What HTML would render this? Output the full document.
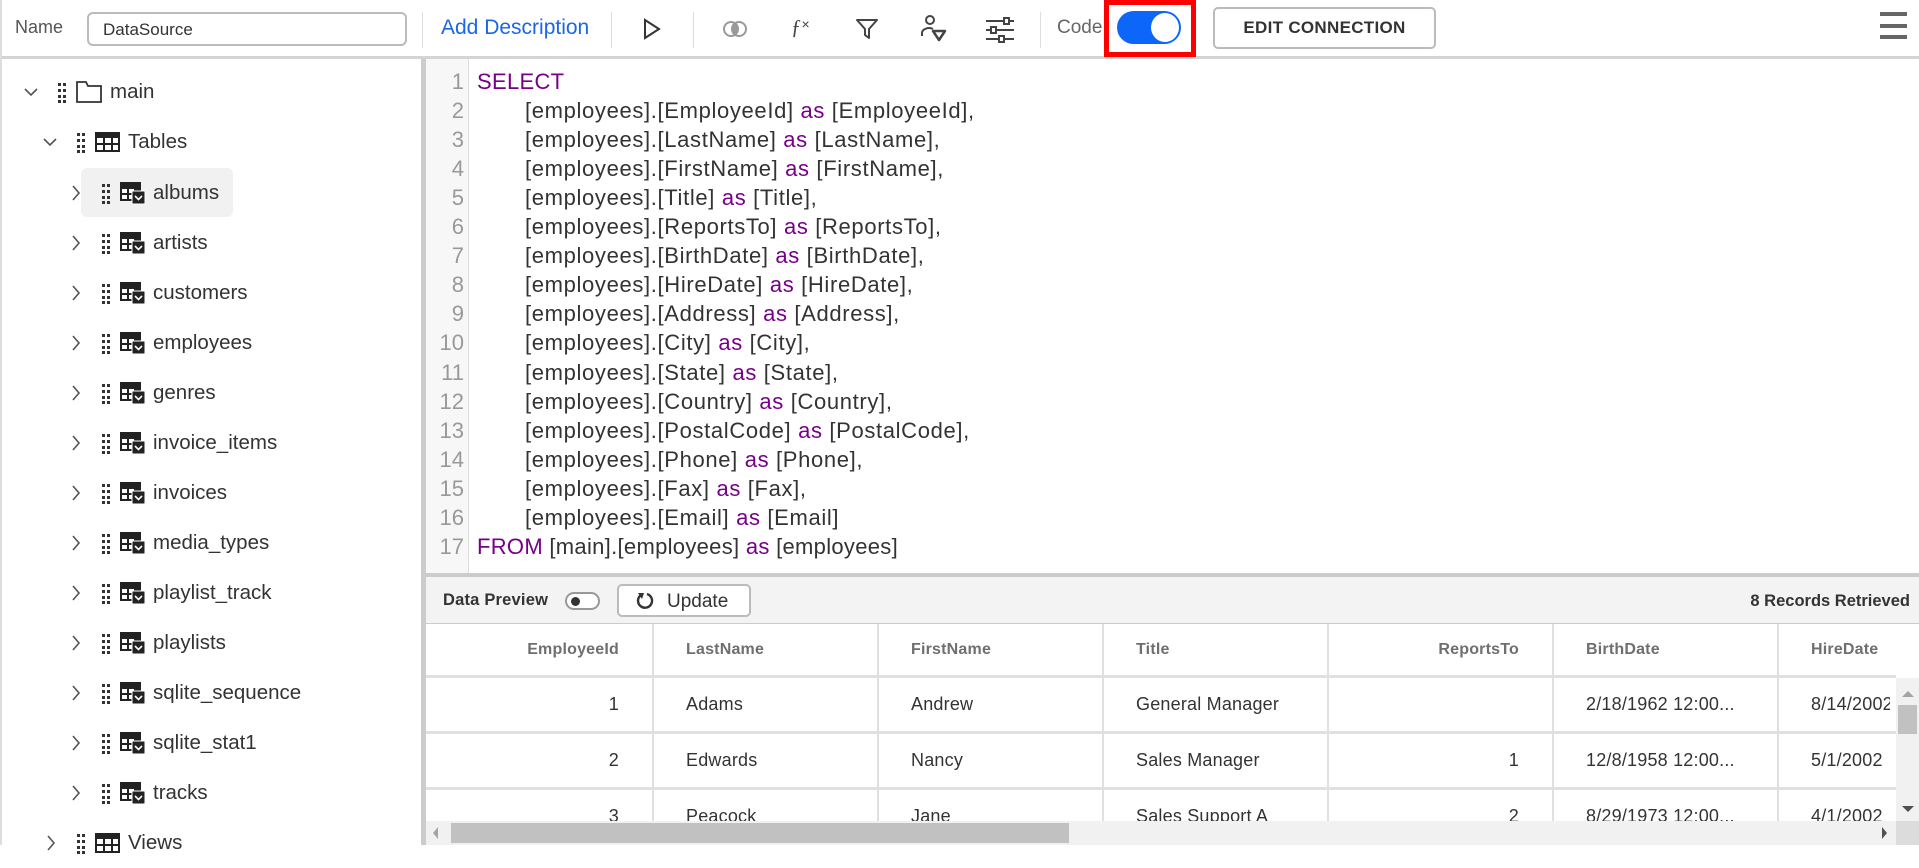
<!DOCTYPE html>
<html><head><meta charset="utf-8"><style>
*{box-sizing:border-box;margin:0;padding:0}
body{width:1919px;height:845px;overflow:hidden;background:#fff;font-family:"Liberation Sans",sans-serif;position:relative;color:#333}
.a{position:absolute}
.sep{position:absolute;top:12px;width:1px;height:36px;background:#ddd}
.row{position:absolute;height:50px;display:flex;align-items:center;font-size:20.5px;color:#333}
.ln{position:absolute;left:426px;width:38px;text-align:right;color:#999;font-size:22px}
.cl{position:absolute;font-size:22px;color:#333;white-space:pre;letter-spacing:0.65px}
.k{color:#770088}
.grid{position:absolute;left:426px;top:624px;width:1470px;height:197px;overflow:hidden}
.hc,.c{position:absolute;height:100%;display:flex;align-items:center;padding:0 33px 0 32px;white-space:nowrap;overflow:hidden}
.hc{font-weight:bold;color:#6f6f6f;font-size:16px;letter-spacing:0.2px}
.c{font-size:18px;color:#333;letter-spacing:0.2px}
.r{justify-content:flex-end}
</style></head><body>
<div class="a" style="left:0;top:0;width:1919px;height:59px;border-bottom:3px solid #d4d4d4"></div>
<div class="a" style="left:0;top:0;width:2px;height:845px;background:#ddd"></div>
<div class="a" style="left:15px;top:17px;font-size:18px;color:#555">Name</div>
<div class="a" style="left:87px;top:12px;width:320px;height:34px;border:2px solid #bbb;border-radius:6px;font-size:17px;padding:6px 0 0 14px;color:#333">DataSource</div>
<div class="sep" style="left:422px"></div>
<div class="a" style="left:441px;top:16px;font-size:21px;color:#1a66e8">Add Description</div>
<div class="sep" style="left:611px"></div>
<svg class="a" style="left:641px;top:17px" width="22" height="24" viewBox="0 0 22 24"><path d="M4 3 L18 12 L4 21 Z" fill="none" stroke="#333" stroke-width="2"/></svg>
<div class="sep" style="left:693px"></div>
<svg class="a" style="left:722px;top:19px" width="26" height="20"><circle cx="9" cy="10" r="7" fill="none" stroke="#999" stroke-width="2"/><circle cx="17" cy="10" r="7" fill="none" stroke="#999" stroke-width="2"/><path d="M13 4.5 A7 7 0 0 1 13 15.5 A7 7 0 0 1 13 4.5Z" fill="#999"/></svg>
<div class="a" style="left:791px;top:15px;font-size:21px;color:#444;font-family:'Liberation Serif',serif">ƒ<span style="font-size:14px;font-family:'Liberation Sans',sans-serif;vertical-align:5px">×</span></div>
<svg class="a" style="left:855px;top:17px" width="24" height="24"><path d="M2 3 H22 L14 12 V21 L10 18 V12 Z" fill="none" stroke="#444" stroke-width="2" stroke-linejoin="round"/></svg>
<svg class="a" style="left:919px;top:14px" width="28" height="28"><circle cx="11" cy="6" r="4" fill="none" stroke="#444" stroke-width="2"/><path d="M3 22 V19 A7 5 0 0 1 14 15" fill="none" stroke="#444" stroke-width="2"/><path d="M14 17 H26 L20 26 Z" fill="none" stroke="#444" stroke-width="2.5" stroke-linejoin="round"/></svg>
<svg class="a" style="left:985px;top:16px" width="30" height="28"><g stroke="#444" stroke-width="2" fill="#fff"><line x1="1" y1="5" x2="29" y2="5"/><line x1="1" y1="14" x2="29" y2="14"/><line x1="1" y1="23" x2="29" y2="23"/><rect x="19" y="2" width="5" height="6"/><rect x="6" y="11" width="5" height="6"/><rect x="14" y="20" width="5" height="6"/></g></svg>
<div class="sep" style="left:1040px"></div>
<div class="a" style="left:1057px;top:17px;font-size:19px;color:#666">Code</div>
<div class="a" style="left:1104px;top:0;width:92px;height:57px;border:5px solid #f00"></div>
<div class="a" style="left:1117px;top:11px;width:64px;height:33px;border-radius:17px;background:#0d66fa"></div>
<div class="a" style="left:1151px;top:13px;width:28px;height:29px;border-radius:50%;background:#fff"></div>
<div class="a" style="left:1213px;top:7px;width:223px;height:42px;border:2px solid #bbb;border-radius:5px;font-size:17px;font-weight:bold;color:#333;text-align:center;line-height:38px;letter-spacing:.3px">EDIT CONNECTION</div>
<div class="a" style="left:1880px;top:12px;width:27px;height:4px;background:#666"></div>
<div class="a" style="left:1880px;top:24px;width:27px;height:4px;background:#666"></div>
<div class="a" style="left:1880px;top:35px;width:27px;height:4px;background:#666"></div>

<div class="a" style="left:421px;top:59px;width:5px;height:786px;background:#ccc"></div>
<div class="a" style="left:81px;top:168px;width:152px;height:49px;background:#f1f1f1;border-radius:6px"></div>
<div id="tree"></div>

<div class="a" style="left:426px;top:59px;width:43px;height:515px;background:#f7f7f7;border-right:1px solid #ddd"></div>
<div id="code"></div>
<div class="a" style="left:426px;top:573px;width:1493px;height:4px;background:#ccc"></div>

<div class="a" style="left:426px;top:577px;width:1493px;height:47px;background:#f3f3f3;border-bottom:1px solid #ccc"></div>
<div class="a" style="left:443px;top:591px;font-size:16.5px;font-weight:bold;color:#333;letter-spacing:0.2px">Data Preview</div>
<div class="a" style="left:565px;top:592px;width:35px;height:18px;border:2px solid #999;border-radius:9px;background:#fff"></div>
<div class="a" style="left:571px;top:597px;width:9px;height:9px;border-radius:50%;background:#333"></div>
<div class="a" style="left:617px;top:584px;width:134px;height:33px;border:2px solid #bbb;border-radius:5px;background:#fff;font-size:19px;color:#333;padding:5px 0 0 48px">Update</div>
<svg class="a" style="left:635px;top:591px" width="20" height="20"><path d="M6 4 A7 7 0 1 0 12 3" fill="none" stroke="#333" stroke-width="2.4"/><path d="M3 2 L9 2 L7 8 Z" fill="#333"/></svg>
<div class="a" style="left:1700px;top:592px;width:210px;text-align:right;font-size:16.5px;font-weight:bold;color:#333">8 Records Retrieved</div>

<div class="grid" id="grid"></div>
<div class="a" style="left:1896px;top:678px;width:23px;height:143px;background:#f1f1f1"></div>
<div class="a" style="left:1898px;top:705px;width:19px;height:29px;background:#c1c1c1"></div>
<div class="a" style="left:1902px;top:691px;width:0;height:0;border-left:6px solid transparent;border-right:6px solid transparent;border-bottom:6px solid #a3a3a3"></div>
<div class="a" style="left:1902px;top:806px;width:0;height:0;border-left:6px solid transparent;border-right:6px solid transparent;border-top:6px solid #505050"></div>
<div class="a" style="left:426px;top:821px;width:1493px;height:24px;background:#f1f1f1"></div>
<div class="a" style="left:451px;top:823px;width:618px;height:20px;background:#c1c1c1"></div>
<div class="a" style="left:433px;top:827px;width:0;height:0;border-top:6px solid transparent;border-bottom:6px solid transparent;border-right:5px solid #a3a3a3"></div>
<div class="a" style="left:1882px;top:827px;width:0;height:0;border-top:6px solid transparent;border-bottom:6px solid transparent;border-left:5px solid #505050"></div>
<div class="a" style="left:1896px;top:821px;width:23px;height:24px;background:#dcdcdc"></div>

<script>
var grip='<svg width="10" height="22" style="margin-right:8px"><g fill="#333"><rect x="1" y="2" width="3" height="3"/><rect x="6" y="2" width="3" height="3"/><rect x="1" y="8" width="3" height="3"/><rect x="6" y="8" width="3" height="3"/><rect x="1" y="14" width="3" height="3"/><rect x="6" y="14" width="3" height="3"/><rect x="1" y="19" width="3" height="3"/><rect x="6" y="19" width="3" height="3"/></g></svg>';
function chev(down){return down?'<svg width="16" height="12" style="margin-right:18px"><path d="M2 3 L8 9 L14 3" fill="none" stroke="#555" stroke-width="1.6"/></svg>':'<svg width="10" height="18" style="margin-right:20px"><path d="M2 2 L8 9 L2 16" fill="none" stroke="#555" stroke-width="1.6"/></svg>';}
var folder='<svg width="28" height="24" style="margin-right:7px"><path d="M2 2 H11 L13 6 H26 V22 H2 Z" fill="none" stroke="#333" stroke-width="1.8"/></svg>';
var tbl='<svg width="27" height="22" style="margin-right:7px"><rect x="1" y="1" width="25" height="20" fill="#222"/><g fill="#fff"><rect x="3" y="7" width="6" height="5"/><rect x="11" y="7" width="6" height="5"/><rect x="19" y="7" width="5" height="5"/><rect x="3" y="14" width="6" height="5"/><rect x="11" y="14" width="6" height="5"/><rect x="19" y="14" width="5" height="5"/></g></svg>';
var tbl2='<svg width="27" height="24" style="margin-right:7px"><rect x="1" y="1" width="21" height="19" fill="#222"/><g fill="#fff"><rect x="3" y="8" width="5" height="4"/><rect x="10" y="8" width="5" height="4"/><rect x="3" y="14" width="5" height="4"/><rect x="10" y="14" width="5" height="4"/></g><rect x="13" y="10" width="13" height="13" rx="1" fill="#222" stroke="#fff" stroke-width="1"/><path d="M16 15 L19.5 18.5 L23 15" fill="none" stroke="#fff" stroke-width="1.6"/></svg>';
var h='';
h+='<div class="row" style="left:23px;top:67px">'+chev(1)+grip+folder+'main</div>';
h+='<div class="row" style="left:42px;top:117px">'+chev(1)+grip+tbl+'Tables</div>';
var t=['albums','artists','customers','employees','genres','invoice_items','invoices','media_types','playlist_track','playlists','sqlite_sequence','sqlite_stat1','tracks'];
t.forEach(function(n,i){h+='<div class="row" style="left:71px;top:'+(168+i*50)+'px">'+chev(0)+grip+tbl2+n+'</div>';});
h+='<div class="row" style="left:46px;top:818px">'+chev(0)+grip+tbl+'Views</div>';
document.getElementById('tree').innerHTML=h;
var L=[['<span class="k">SELECT</span>',0]];
var f=['EmployeeId','LastName','FirstName','Title','ReportsTo','BirthDate','HireDate','Address','City','State','Country','PostalCode','Phone','Fax','Email'];
f.forEach(function(x,i){L.push(['[employees].['+x+'] <span class="k">as</span> ['+x+']'+(i<14?',':''),1]);});
L.push(['<span class="k">FROM</span> [main].[employees] <span class="k">as</span> [employees]',0]);
var c='';
L.forEach(function(l,i){var y=68.5+i*29.1;c+='<div class="ln" style="top:'+y+'px">'+(i+1)+'</div><div class="cl" style="left:'+(l[1]?525:477)+'px;top:'+y+'px'+(l[1]?'':';letter-spacing:0.3px')+'">'+l[0]+'</div>';});
document.getElementById('code').innerHTML=c;
var cols=[[0,226,'EmployeeId',1],[226,451,'LastName'],[451,676,'FirstName'],[676,901,'Title'],[901,1126,'ReportsTo',1],[1126,1351,'BirthDate'],[1351,1464,'HireDate']];
var rows=[['1','Adams','Andrew','General Manager','','2/18/1962 12:00...','8/14/2002'],['2','Edwards','Nancy','Sales Manager','1','12/8/1958 12:00...','5/1/2002'],['3','Peacock','Jane','Sales Support A','2','8/29/1973 12:00...','4/1/2002']];
var g='';
g+='<div class="a" style="left:0;top:0;width:1470px;height:54px;border-bottom:3px solid #e0e0e0">';
cols.forEach(function(cl,i){g+='<div class="hc'+(cl[3]?' r':'')+'" style="left:'+cl[0]+'px;width:'+(cl[1]-cl[0])+'px;'+(i?'border-left:2px solid #e0e0e0;':'')+'">'+cl[2]+'</div>';});
g+='</div>';
rows.forEach(function(r,ri){g+='<div class="a" style="left:0;top:'+(54+ri*56)+'px;width:1470px;height:56px;border-bottom:3px solid #e0e0e0">';
cols.forEach(function(cl,i){g+='<div class="c'+(cl[3]?' r':'')+'" style="left:'+cl[0]+'px;width:'+(cl[1]-cl[0])+'px;'+(i?'border-left:2px solid #e0e0e0;':'')+(i==6?'padding-right:0;':'')+'">'+r[i]+'</div>';});
g+='</div>';});
document.getElementById('grid').innerHTML=g;
</script>
</body></html>
